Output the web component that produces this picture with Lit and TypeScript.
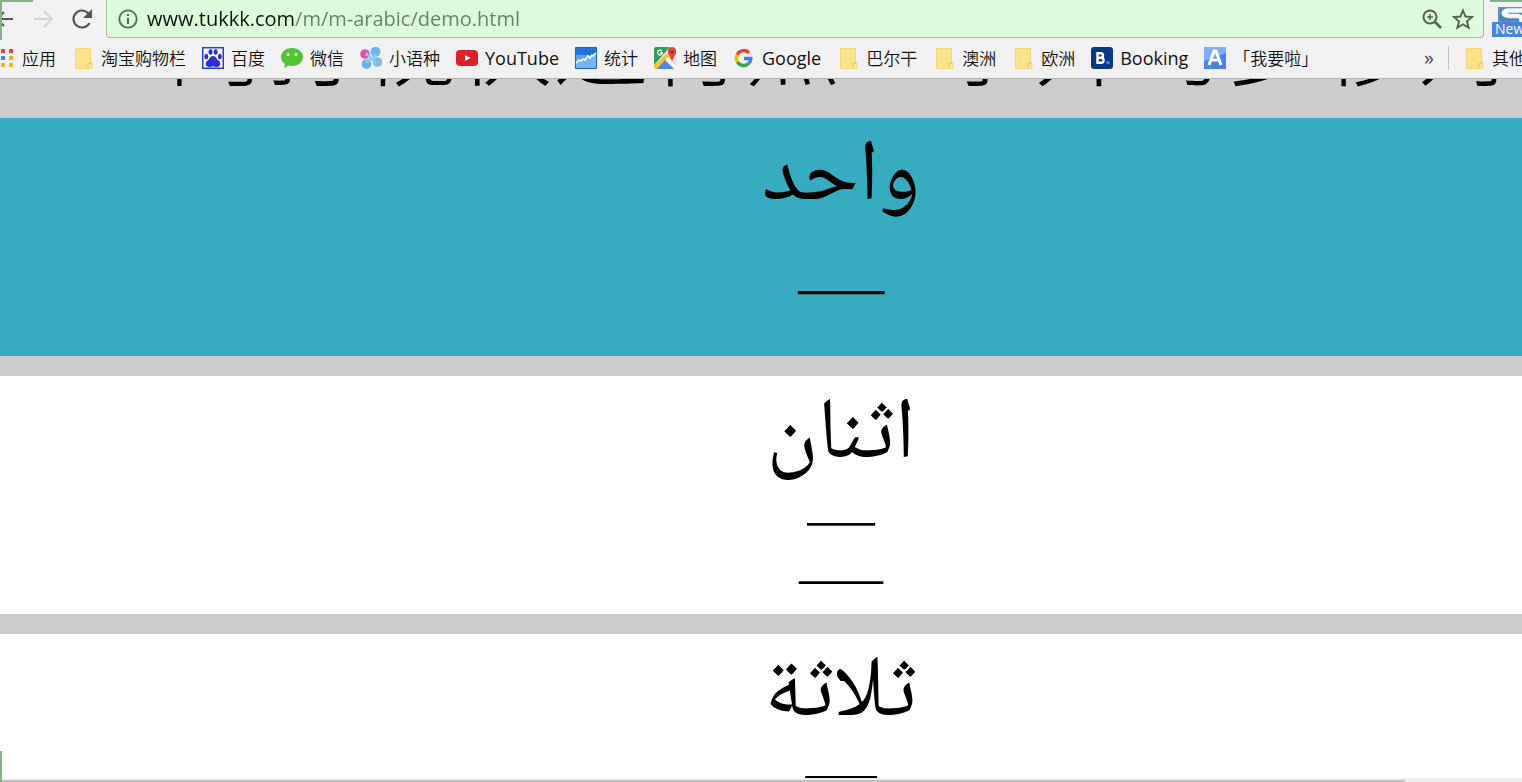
import { LitElement, html, css, svg } from "lit";
import { customElement } from "lit/decorators.js";

const icons: Record<string, unknown> = {
  apps: svg`<g><path fill="#e8453c" d="M8 2h4v4H8zM16 2h4v4h-4z"/><path fill="#3f8ae8" d="M8 9h4v4H8z"/><path fill="#efb02e" d="M16 9h4v4h-4zM16 16h4v4h-4z"/><path fill="#efb02e" d="M8 16h4v4H8z"/></g>`,
  folder: svg`<path fill="#fce38a" stroke="#f0d680" d="M3.500 1.500h15v13.500h1.500v6.500H3.500z"/><path fill="none" stroke="#e6c565" d="M18.500 15v1.500h-2.500V21"/>`,
  baidu: svg`<path fill="#fff" stroke="#2b3ccb" stroke-width="1.500" d="M.75.75h20.500v20.500H.75z"/><g fill="#2932cf"><ellipse cx="4.300" cy="9.500" rx="2" ry="2.700"/><ellipse cx="8.500" cy="5" rx="2" ry="2.800"/><ellipse cx="13.600" cy="5" rx="2" ry="2.800"/><ellipse cx="17.800" cy="9.500" rx="2" ry="2.700"/><path d="M11 9c3 0 3.500 3 5.500 4.500 3 2.500 2 6.500-1.500 6.500-2 0-2.500-.6-4-.6s-2 .6-4 .6c-3.500 0-4.500-4-1.500-6.500C7.500 12 8 9 11 9z"/></g>`,
  wechat: svg`<path fill="#52c332" d="M11 1C4.800 1 0 5 0 10c0 3 1.700 5.300 4 7l-.7 4 4.200-2.500c1.100.3 2.200.5 3.500.5 6.200 0 11-4 11-9s-4.800-9-11-9z"/><circle cx="7" cy="7.500" r="1.500" fill="#e8fbe2"/><circle cx="15" cy="7.500" r="1.500" fill="#e8fbe2"/>`,
  flower: svg`<g><circle cx="5" cy="7" r="4.800" fill="#dc55ab"/><circle cx="15.500" cy="4.800" r="5" fill="#69b4e8"/><circle cx="6.500" cy="17" r="4.800" fill="#67b2e8"/><circle cx="17.500" cy="15" r="4.800" fill="#7cbce8"/><path fill="#8ac6ee" d="M12 10l2-4 3 2-3 4 3 2-2 4-4-5-4 4-2-4 5-2-5-3 2-3z"/></g>`,
  youtube: svg`<rect y="3" width="22" height="16" rx="4" fill="#d9252a"/><path fill="#fff" d="M9 8l5.500 3L9 14z"/>`,
  stats: svg`<path fill="#5ba2f0" stroke="#2462b0" d="M.5.5h21v21H.5z"/><path fill="#2675d9" d="M1 1h20v7H1z"/><path stroke="#1956a8" stroke-dasharray="1 3" d="M2 4.500h18"/><path fill="#79b5f5" d="M1 16l4-3 3 1 4-4 3 1 6-6v16H1z"/><path fill="none" stroke="#fff" stroke-width="1.500" d="M1 16l3-3 2 1 2-2 2 1 3-4 2 2 2-3 1 1 3-3"/>`,
  maps: svg`<path fill="#349b58" d="M0 2q0-2 2-2h14L0 18z"/><path fill="#d8dadb" d="M16 0h4q2 0 2 2v18L13 9z"/><path fill="#f5c33b" d="M15 4l3 3L4 22H2q-2 0-2-2v-2z"/><path fill="#5285e9" d="M11 13l9 9H3z"/><path fill="#fff" d="M13 10l9 9v2l-10-9z"/><path fill="#dc4639" d="M18 0a4.500 4.500 0 0 1 4 6l-4 8-4-8a4.500 4.500 0 0 1 4-6z"/><circle cx="18" cy="5" r="1.500" fill="#812b26"/><path fill="none" stroke="#fff" stroke-width="1.300" d="M8 4a2.500 2.500 0 1 0 .5 2H6"/>`,
  google: svg`<g fill="none" stroke-width="3.400"><path stroke="#e54335" d="M4.200 8A7 7 0 0 1 16 6"/><path stroke="#f6b704" d="M4.500 15a7 7 0 0 1-.3-7"/><path stroke="#34a353" d="M15.500 16.500A7 7 0 0 1 4.500 15"/><path stroke="#4280ef" d="M11 11.500h6.800a7 7 0 0 1-2.300 5"/></g>`,
  booking: svg`<rect width="22" height="22" rx="3" fill="#0b3680"/><path fill="none" stroke="#fff" stroke-width="2.400" d="M6.500 6.200h3.200a2.200 2.200 0 0 1 0 4.600H6.500h3.600a2.500 2.500 0 0 1 0 5H6.500V5"/><circle cx="17" cy="15.500" r="1.700" fill="#2a9be6"/>`,
  letter: svg`<path fill="#4a83e6" d="M0 0h22v22H0z"/><path fill="#81adf2" d="M0 0h22v6L0 14z"/><path fill="none" stroke="#fff" stroke-width="3" d="M5 18l5-14h2l5 14M7 13h8"/>`,
};

const bookmarks: [string, string][] = [
  ["apps", "应用"],
  ["folder", "淘宝购物栏"],
  ["baidu", "百度"],
  ["wechat", "微信"],
  ["flower", "小语种"],
  ["youtube", "YouTube"],
  ["stats", "统计"],
  ["maps", "地图"],
  ["google", "Google"],
  ["folder", "巴尔干"],
  ["folder", "澳洲"],
  ["folder", "欧洲"],
  ["booking", "Booking"],
  ["letter", "「我要啦」"],
];

const words: [string, string][] = [
  ["واحد", "一"],
  ["اثنان", "二"],
  ["ثلاثة", "三"],
];

@customElement("browser-bar")
export class BrowserBar extends LitElement {
  static styles = css`
    :host {
      display: block;
      flex: none;
      background: #f2f1f2;
      border-bottom: 1px solid #b4b4b4;
      font-family: "Open Sans", "Noto Sans CJK SC", sans-serif;
      color: #111;
    }
    .nav {
      display: flex;
      align-items: stretch;
      height: 38px;
      overflow: hidden;
    }
    .buttons {
      display: flex;
      align-items: center;
      gap: 15px;
      width: 106px;
      margin-left: -8px;
      box-sizing: border-box;
      flex: none;
    }
    button {
      border: 0;
      padding: 0;
      background: none;
      display: block;
      font: inherit;
      color: inherit;
      flex: none;
    }
    svg {
      display: block;
    }
    .address {
      flex: 1;
      min-width: 0;
      display: flex;
      align-items: center;
      gap: 8px;
      padding: 0 8px 0 10px;
      margin-left: 8px;
      background: #dcfbda;
      border: 1px solid #a3b8a3;
      border-top: 0;
      border-radius: 0 0 4px 4px;
    }
    .url {
      flex: 1;
      min-width: 0;
      border: 0;
      padding: 0;
      outline: 0;
      height: 32px;
      font: 20px/32px "Open Sans", sans-serif;
      color: transparent;
      background: linear-gradient(90deg, #0a140a 147px, #66806a 147px);
      -webkit-background-clip: text;
      background-clip: text;
    }
    .ext {
      width: 38px;
      flex: none;
      overflow: hidden;
      padding: 7px 0 0 8px;
      box-sizing: border-box;
    }
    .logo {
      margin-left: 6px;
    }
    .badge {
      display: block;
      width: 38px;
      height: 15px;
      background: #4b83e2;
      color: #fff;
      font-size: 14px;
      line-height: 14px;
      padding-left: 3px;
    }
    .marks {
      display: flex;
      align-items: center;
      gap: 16px;
      height: 40px;
      margin-left: -7px;
      overflow: hidden;
    }
    a {
      display: flex;
      align-items: center;
      gap: 7px;
      flex: none;
      color: inherit;
      text-decoration: none;
      font-size: 17px;
      line-height: 24px;
      white-space: nowrap;
    }
    .latin {
      font-size: 18px;
      font-family: "Open Sans", sans-serif;
    }
    .cjk {
      font-family: "Noto Sans CJK SC", sans-serif;
      font-weight: 350;
    }
    .rest {
      display: flex;
      align-items: center;
      margin-left: auto;
      margin-right: -4px;
    }
    .more {
      width: 14px;
      font-size: 20px;
      line-height: 24px;
      color: #444;
    }
    .other {
      margin-left: 12px;
      padding-left: 14px;
      border-left: 1px solid #c4c4c4;
    }
  `;

  mark(icon: string, label: string, extra = "") {
    const kind = /^[A-Za-z]/.test(label) ? "latin" : "cjk";
    return html`<a class=${extra} href="#"><svg width="22" height="22" viewBox="0 0 22 22">${icons[icon]}</svg><span class=${kind}>${label}</span></a>`;
  }

  render() {
    return html`
      <div class="nav">
        <div class="buttons">
          <button aria-label="Back"><svg width="24" height="24" viewBox="0 0 24 24" fill="none" stroke="#555" stroke-width="2"><path d="M21 12H5M12 5l-7 7 7 7"/></svg></button>
          <button aria-label="Forward" disabled><svg width="24" height="24" viewBox="0 0 24 24" fill="none" stroke="#d4d4d4" stroke-width="2"><path d="M3 12h17M13 4l8 8-8 8"/></svg></button>
          <button aria-label="Reload"><svg width="24" height="24" viewBox="0 0 24 24"><path fill="none" stroke="#555" stroke-width="2.200" d="M19.500 16A8.500 8.500 0 1 1 18.500 6.500"/><path fill="#555" d="M22 2v9h-9z"/></svg></button>
        </div>
        <div class="address">
          <button aria-label="Site information"><svg width="22" height="22" viewBox="0 0 22 22"><circle cx="11" cy="11" r="8.700" fill="none" stroke="#536853" stroke-width="1.800"/><path fill="#536853" d="M10 10h2v6h-2zM10 6h2v2h-2z"/></svg></button>
          <input class="url" aria-label="Address" value="www.tukkk.com/m/m-arabic/demo.html" />
          <button aria-label="Zoom"><svg width="22" height="22" viewBox="0 0 22 22" fill="none" stroke="#4f624f" stroke-width="2"><circle cx="9" cy="9" r="6.500"/><path d="M14 14l6 6" stroke-width="2.600"/><path d="M6 9h6M9 6v6" stroke-width="1.500"/></svg></button>
          <button aria-label="Bookmark this page"><svg width="24" height="22" viewBox="0 0 24 22" fill="none" stroke="#4f624f" stroke-width="1.900"><path d="M12 2.500l2.500 6 6.500.5-5 4.300 1.600 6.400L12 16.300l-5.600 3.400L8 13.300 3 9l6.500-.5z"/></svg></button>
        </div>
        <div class="ext">
          <svg class="logo" width="32" height="15" viewBox="0 0 32 15"><path fill="#5f93bd" d="M0 0h32v15H0z"/><path fill="#4c86b6" d="M2 2h28v12H2z"/><path fill="none" stroke="#f4fafd" stroke-width="4.500" d="M24 3.500H12c-9 0-8 5 0 5.500h8c3 0 4 3 3 6"/></svg>
          <span class="badge">New</span>
        </div>
      </div>
      <nav class="marks">
        ${bookmarks.map(([icon, label]) => this.mark(icon, label))}
        <div class="rest">
          <button class="more" aria-label="More bookmarks">»</button>
          ${this.mark("folder", "其他", "other")}
        </div>
      </nav>
    `;
  }
}

@customElement("app-root")
export class AppRoot extends LitElement {
  static styles = css`
    :host {
      display: flex;
      flex-direction: column;
      position: relative;
      height: 100vh;
      overflow: hidden;
      background: #ccc;
    }
    .view {
      flex: 1;
      min-height: 0;
      overflow: hidden;
    }
    .page {
      width: 110.500%;
      display: flex;
      flex-direction: column;
      gap: 20px;
      color: #000;
      text-align: center;
      font-size: 96px;
    }
    .title {
      height: 19px;
      margin: 0;
      display: flex;
      flex-direction: column;
      justify-content: flex-end;
      align-items: center;
      font: 300 96px/123px "Noto Sans CJK SC", sans-serif;
      white-space: nowrap;
    }
    .card {
      background: #fff;
      height: 238px;
      flex: none;
    }
    .card.active {
      background: #37abbf;
    }
    .arabic {
      font-family: "Noto Naskh Arabic", "DejaVu Sans", sans-serif;
      font-size: 87px;
      line-height: 97px;
      padding-top: 14px;
    }
    .hanzi {
      font-family: "Noto Sans CJK SC", sans-serif;
      font-weight: 100;
      line-height: 119px;
    }
    .scroll {
      flex: none;
      height: 2px;
      border-top: 2px solid #f0f0f0;
      background: #f0f0f0;
    }
    .thumb {
      width: 92.300%;
      height: 2px;
      background: #c1c1c1;
    }
    .edge {
      position: absolute;
      background: #83b287;
      width: 2px;
      left: 0;
    }
    .edge.a {
      top: 0;
      height: 40px;
    }
    .edge.b {
      bottom: 0;
      height: 31px;
    }
    .edge.c {
      top: 0;
      width: 33px;
      height: 2px;
    }
    .edge.d {
      top: 0;
      left: auto;
      right: 0;
      width: 32px;
      height: 2px;
    }
  `;

  render() {
    return html`
      <browser-bar></browser-bar>
      <main class="view">
        <div class="page">
          <h1 class="title">阿打视伏这行点一字开习多移对</h1>
          ${words.map(
            ([arabic, hanzi], i) => html`<section class="card ${i === 0 ? "active" : ""}">
              <div class="arabic" lang="ar" dir="rtl">${arabic}</div>
              <div class="hanzi" lang="zh">${hanzi}</div>
            </section>`
          )}
        </div>
      </main>
      <div class="scroll"><div class="thumb"></div></div>
      <div class="edge a"></div>
      <div class="edge b"></div>
      <div class="edge c"></div>
      <div class="edge d"></div>
    `;
  }
}
